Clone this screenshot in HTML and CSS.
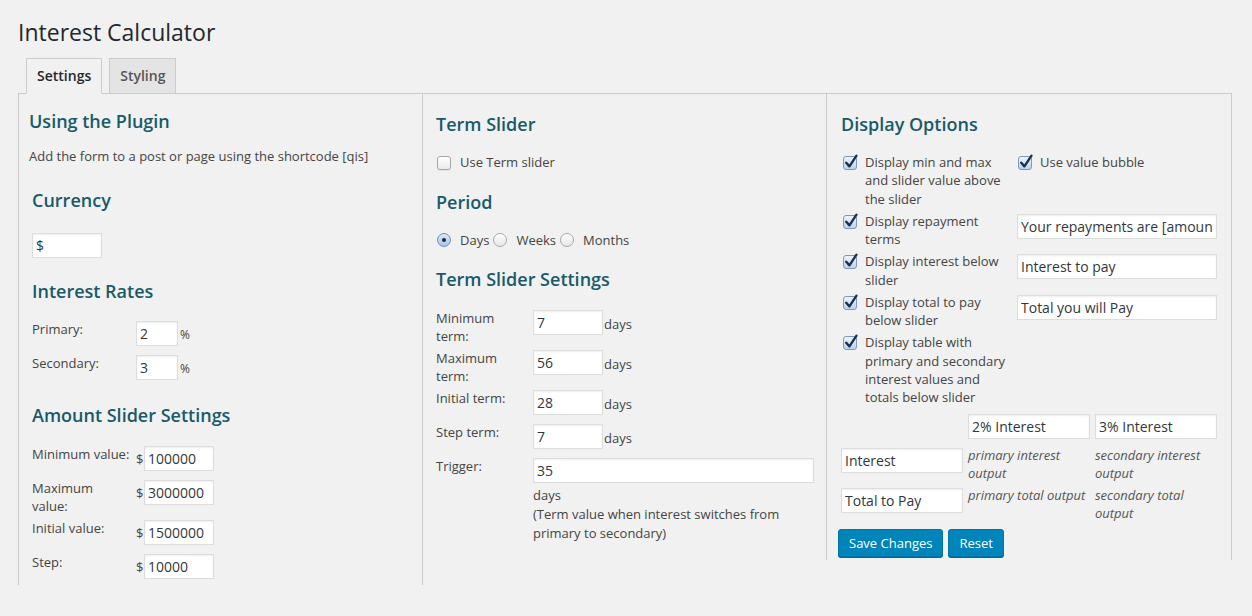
FILE: index.html
```html
<!DOCTYPE html>
<html lang="en">
<head>
<meta charset="utf-8">
<title>Interest Calculator</title>
<link rel="stylesheet" href="styles.css">
</head>
<body>
<div class="wrap">
  <h1 class="page-title">Interest Calculator</h1>
  <div class="tabs">
    <a class="tab tab-active">Settings</a>
    <a class="tab">Styling</a>
  </div>

  <div class="columns">
    <section class="col col-left">
      <h2 class="sec-title sec-first">Using the Plugin</h2>
      <p class="intro">Add the form to a post or page using the shortcode [qis]</p>
      <div class="indent">
        <h2 class="sec-title sec-currency">Currency</h2>
        <input class="field field-currency" value="$">

        <h2 class="sec-title sec-rates">Interest Rates</h2>
        <div class="form-grid">
          <div class="row"><span class="lbl lbl-left">Primary:</span><span class="ctl"><input class="field field-rate" value="2"><span class="unit-pct">%</span></span></div>
          <div class="row"><span class="lbl lbl-left">Secondary:</span><span class="ctl"><input class="field field-rate" value="3"><span class="unit-pct">%</span></span></div>
        </div>

        <h2 class="sec-title sec-amount">Amount Slider Settings</h2>
        <div class="form-grid">
          <div class="row"><span class="lbl lbl-left">Minimum value:</span><span class="ctl"><span class="cur">$</span><input class="field field-amt" value="100000"></span></div>
          <div class="row"><span class="lbl lbl-left">Maximum<br>value:</span><span class="ctl"><span class="cur">$</span><input class="field field-amt" value="3000000"></span></div>
          <div class="row"><span class="lbl lbl-left">Initial value:</span><span class="ctl"><span class="cur">$</span><input class="field field-amt" value="1500000"></span></div>
          <div class="row"><span class="lbl lbl-left">Step:</span><span class="ctl"><span class="cur">$</span><input class="field field-amt" value="10000"></span></div>
        </div>
      </div>
    </section>

    <section class="col col-mid">
      <h2 class="sec-title sec-top">Term Slider</h2>
      <label class="choice choice-term"><span class="box"></span><span>Use Term slider</span></label>

      <h2 class="sec-title sec-period">Period</h2>
      <div class="radios">
        <label class="choice"><span class="radio radio-on"></span><span>Days</span></label>
        <label class="choice"><span class="radio"></span><span>Weeks</span></label>
        <label class="choice"><span class="radio"></span><span>Months</span></label>
      </div>

      <h2 class="sec-title sec-term">Term Slider Settings</h2>
      <div class="form-grid">
        <div class="row"><span class="lbl lbl-mid">Minimum<br>term:</span><span class="ctl"><input class="field field-term" value="7"><span class="unit">days</span></span></div>
        <div class="row"><span class="lbl lbl-mid">Maximum<br>term:</span><span class="ctl"><input class="field field-term" value="56"><span class="unit">days</span></span></div>
        <div class="row"><span class="lbl lbl-mid">Initial term:</span><span class="ctl"><input class="field field-term" value="28"><span class="unit">days</span></span></div>
        <div class="row"><span class="lbl lbl-mid">Step term:</span><span class="ctl"><input class="field field-term" value="7"><span class="unit">days</span></span></div>
        <div class="row"><span class="lbl lbl-mid">Trigger:</span>
          <div class="ctl-wide">
            <input class="field field-trigger" value="35">
            <p class="note">days<br>(Term value when interest switches from primary to secondary)</p>
          </div>
        </div>
      </div>
    </section>

    <section class="col col-right">
      <h2 class="sec-title sec-top">Display Options</h2>
      <div class="opt-grid">
        <div class="opt"><span class="check"><svg viewBox="0 0 14 15"><path d="M3 8.2 L6 11.6 L12.6 1.6" fill="none" stroke="#18304f" stroke-width="2.2" stroke-linecap="round" stroke-linejoin="round"/></svg></span><span class="opt-text">Display min and max and slider value above the slider</span></div>
        <div class="opt opt-side"><span class="check"><svg viewBox="0 0 14 15"><path d="M3 8.2 L6 11.6 L12.6 1.6" fill="none" stroke="#18304f" stroke-width="2.2" stroke-linecap="round" stroke-linejoin="round"/></svg></span><span>Use value bubble</span></div>

        <div class="opt"><span class="check"><svg viewBox="0 0 14 15"><path d="M3 8.2 L6 11.6 L12.6 1.6" fill="none" stroke="#18304f" stroke-width="2.2" stroke-linecap="round" stroke-linejoin="round"/></svg></span><span class="opt-text">Display repayment terms</span></div>
        <div class="opt-input"><input class="field field-opt" value="Your repayments are [amount] for [term]"></div>

        <div class="opt"><span class="check"><svg viewBox="0 0 14 15"><path d="M3 8.2 L6 11.6 L12.6 1.6" fill="none" stroke="#18304f" stroke-width="2.2" stroke-linecap="round" stroke-linejoin="round"/></svg></span><span class="opt-text">Display interest below slider</span></div>
        <div class="opt-input"><input class="field field-opt" value="Interest to pay"></div>

        <div class="opt"><span class="check"><svg viewBox="0 0 14 15"><path d="M3 8.2 L6 11.6 L12.6 1.6" fill="none" stroke="#18304f" stroke-width="2.2" stroke-linecap="round" stroke-linejoin="round"/></svg></span><span class="opt-text">Display total to pay below slider</span></div>
        <div class="opt-input"><input class="field field-opt" value="Total you will Pay"></div>

        <div class="opt"><span class="check"><svg viewBox="0 0 14 15"><path d="M3 8.2 L6 11.6 L12.6 1.6" fill="none" stroke="#18304f" stroke-width="2.2" stroke-linecap="round" stroke-linejoin="round"/></svg></span><span class="opt-text">Display table with primary and secondary interest values and totals below slider</span></div>
        <div class="opt-empty"></div>
      </div>

      <div class="itable">
        <div class="icell"></div>
        <div class="icell"><input class="field field-full" value="2% Interest"></div>
        <div class="icell"><input class="field field-full" value="3% Interest"></div>

        <div class="icell"><input class="field field-full" value="Interest"></div>
        <div class="icell icell-text">primary interest output</div>
        <div class="icell icell-text">secondary interest output</div>

        <div class="icell"><input class="field field-full" value="Total to Pay"></div>
        <div class="icell icell-text">primary total output</div>
        <div class="icell icell-text">secondary total output</div>
      </div>

      <div class="actions">
        <button class="btn" type="button">Save Changes</button>
        <button class="btn" type="button">Reset</button>
      </div>
    </section>
  </div>
</div>
</body>
</html>
```

FILE: styles.css
```css
html, body {
  margin: 0;
  padding: 0;
  background: #f1f1f1;
}

body {
  font-family: "Open Sans", "Liberation Sans", sans-serif;
  font-size: 13px;
  color: #444;
}

.wrap {
  width: 1214px;
  margin-left: 18px;
}

.page-title {
  margin: 0;
  padding-top: 18px;
  font-size: 23px;
  line-height: 29px;
  font-weight: 400;
  color: #23282d;
}

.tabs {
  display: flex;
  margin-top: 11px;
  border-bottom: 1px solid #ccc;
}

.tab {
  display: block;
  margin: 0 0 -1px 7px;
  padding: 5px 10px;
  line-height: 24px;
  font-size: 14px;
  font-weight: 600;
  color: #555;
  background: #e4e4e4;
  border: 1px solid #ccc;
}

.tab:first-child {
  margin-left: 8px;
}

.tab-active {
  color: #23282d;
  background: #f1f1f1;
  border-bottom-color: #f1f1f1;
}

.columns {
  display: flex;
  align-items: flex-start;
}

.col {
  box-sizing: border-box;
  flex: none;
}

.col-left {
  width: 405px;
  padding: 0 10px;
  border-left: 1px solid #ccc;
  border-right: 1px solid #ccc;
}

.col-mid {
  width: 403px;
  padding: 0 12px 0 13px;
}

.col-right {
  width: 406px;
  padding: 0 12px 3px 14px;
  border-left: 1px solid #ccc;
  border-right: 1px solid #ccc;
}

.sec-title {
  margin: 0;
  font-size: 18px;
  line-height: 24px;
  font-weight: 600;
  color: #185a69;
}

.sec-first { margin-top: 15px; }
.sec-currency { margin-top: 22px; }
.sec-rates { margin-top: 21px; }
.sec-amount { margin-top: 17px; }
.sec-top { margin-top: 18px; }
.sec-period { margin-top: 18px; }
.sec-term { margin-top: 18px; }

.intro {
  margin: 14px 0 0;
  line-height: 18.5px;
}

.indent {
  padding-left: 3px;
}

.field {
  box-sizing: border-box;
  display: block;
  height: 25px;
  margin: 0;
  padding: 0 3px;
  border: 1px solid #ddd;
  border-radius: 0;
  background: #fff;
  box-shadow: inset 0 1px 2px rgba(0, 0, 0, 0.07);
  font-family: "Open Sans", "Liberation Sans", sans-serif;
  font-size: 14px;
  color: #32373c;
  outline: none;
}

.field-currency {
  width: 70px;
  margin-top: 21px;
}

.field-rate { width: 42px; }
.field-amt { width: 70px; }
.field-term { width: 70px; }
.field-trigger { width: 100%; }
.field-opt { width: 200px; }
.field-full { width: 100%; }

.form-grid {
  margin-top: 15px;
}

.sec-amount + .form-grid,
.sec-term + .form-grid {
  margin-top: 16px;
}

.row {
  display: flex;
  align-items: flex-start;
  box-sizing: border-box;
  min-height: 34px;
  padding: 2px 0;
}

.lbl {
  flex: none;
  line-height: 18px;
}

.lbl-left { width: 104px; }
.lbl-mid { width: 97px; }

.ctl {
  display: flex;
  align-items: center;
  margin-top: 1px;
}

.unit-pct {
  margin-left: 2px;
  font-size: 12px;
  padding-top: 3px;
}

.unit {
  margin-left: 1px;
  padding-top: 2px;
}

.cur {
  width: 8px;
  font-size: 13px;
  padding-top: 1px;
}

.ctl-wide {
  width: 281px;
  margin-top: 1px;
}

.note {
  margin: 3px 0 0;
  line-height: 19px;
}

/* checkboxes and radios */
.choice {
  display: inline-flex;
  align-items: center;
  line-height: 18.5px;
}

.choice-term {
  display: flex;
  margin-top: 17px;
}

.box {
  box-sizing: border-box;
  width: 14px;
  height: 14px;
  margin: 1px 9px 0 1px;
  border: 1px solid #a6a6a6;
  border-radius: 3px;
  background: linear-gradient(#ffffff, #ebebeb);
  box-shadow: 0 1px 1px rgba(0, 0, 0, 0.06);
}

.radios {
  display: flex;
  margin-top: 17px;
}

.radios .choice {
  margin-right: 4px;
}

.radio {
  box-sizing: border-box;
  width: 14px;
  height: 14px;
  margin: 1px 9px 0 1px;
  border: 1px solid #a8a8a8;
  border-radius: 50%;
  background: linear-gradient(#ffffff, #e6e6e6);
  position: relative;
}

.radios .choice + .choice .radio {
  margin-left: 0;
}

.radio-on {
  border-color: #6f8fb8;
  background: linear-gradient(#dbe8f7, #a9c6e8);
}

.radio-on::after {
  content: "";
  position: absolute;
  left: 4px;
  top: 4px;
  width: 4px;
  height: 4px;
  border-radius: 50%;
  background: #1c2a3f;
}

.opt-grid {
  display: grid;
  grid-template-columns: 176px 200px;
  margin-top: 15px;
}

.opt {
  display: flex;
  align-items: flex-start;
  padding: 2px 0;
  line-height: 18.25px;
}

.opt-text {
  width: 142px;
}

.check {
  position: relative;
  flex: none;
  box-sizing: border-box;
  width: 14px;
  height: 14px;
  margin: 3px 8px 0 2px;
  border: 1px solid #7d98ba;
  border-radius: 3px;
  background: linear-gradient(#eef4fb, #bcd2ea);
}

.opt-side .check {
  margin-left: 1px;
}

.check svg {
  position: absolute;
  left: -1px;
  top: -3px;
  width: 15px;
  height: 16px;
}

.opt-input {
  padding: 4px 0 2px;
}

.itable {
  display: grid;
  grid-template-columns: repeat(3, 122px);
  column-gap: 5px;
  margin: 2px 0 0 0;
}

.icell {
  box-sizing: border-box;
  min-height: 34px;
  padding: 4px 0 2px;
}

.icell-text {
  padding: 2px 0;
  font-style: italic;
  line-height: 18px;
  color: #555;
}

.actions {
  display: flex;
  gap: 5px;
  margin: 5px 0 0 -3px;
}

.btn {
  box-sizing: border-box;
  height: 28px;
  margin: 0;
  padding: 0 10px 1px;
  border: 1px solid #0073aa;
  border-radius: 3px;
  background: #0085ba;
  box-shadow: 0 1px 0 #006799;
  color: #fff;
  font-family: "Open Sans", "Liberation Sans", sans-serif;
  font-size: 13px;
  line-height: 26px;
  cursor: pointer;
}
```
